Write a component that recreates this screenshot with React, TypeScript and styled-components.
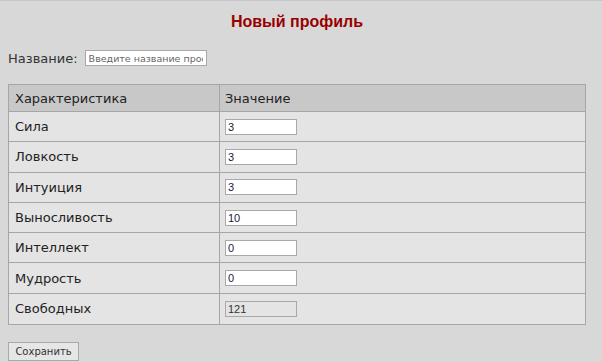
import React from "react";
import styled, { createGlobalStyle } from "styled-components";

const Global = createGlobalStyle`
  html, body { margin: 0; padding: 0; background: #d8d8d8; }
  body { font-family: "DejaVu Sans", Verdana, sans-serif; }
  * { box-sizing: border-box; }
`;

const Page = styled.div`
  width: 602px;
  height: 362px;
  border-top: 1px solid #c6c6c6;
  padding: 0 16px 0 8px;
  overflow: hidden;
`;

const Title = styled.h1`
  margin: 0;
  padding-top: 10px;
  line-height: 22px;
  font-family: "Liberation Sans", Arial, sans-serif;
  font-size: 16px;
  font-weight: bold;
  color: #990000;
  text-align: center;
`;

const NameRow = styled.div`
  display: flex;
  align-items: center;
  gap: 7px;
  margin-top: 17px;
  height: 16px;
`;

const Label = styled.label`
  font-size: 13px;
  color: #333;
`;

const NameInput = styled.input`
  width: 122px;
  height: 16px;
  border: 1px solid #a9a9a9;
  background: #fff;
  padding: 0 3px;
  font-family: "DejaVu Sans", Verdana, sans-serif;
  font-size: 9.5px;
  outline: none;
  &::placeholder { color: #666; }
`;

const Grid = styled.div`
  margin-top: 18px;
  width: 578px;
  border: 1px solid #a6a6a6;
  display: grid;
  grid-template-columns: 211px 1fr;
  grid-template-rows: 27px;
  grid-auto-rows: 30.3px;
  background: #e4e4e4;
`;

const Cell = styled.div<{ $head?: boolean; $first?: boolean; $last?: boolean }>`
  display: flex;
  align-items: center;
  padding-left: ${(p) => (p.$first ? 6 : 5)}px;
  font-size: 13px;
  color: #222;
  background: ${(p) => (p.$head ? "#c8c8c8" : "#e4e4e4")};
  border-right: ${(p) => (p.$first ? "1px solid #a6a6a6" : "none")};
  border-bottom: ${(p) => (p.$last ? "none" : "1px solid #a6a6a6")};
`;

const ValueInput = styled.input<{ $disabled?: boolean }>`
  width: 72px;
  height: 16px;
  border: 1px solid #a9a9a9;
  background: ${(p) => (p.$disabled ? "#e4e4e4" : "#fff")};
  padding: 0 2px;
  font-family: "Liberation Sans", Arial, sans-serif;
  font-size: 11px;
  color: ${(p) => (p.$disabled ? "#333" : "#1a1a3a")};
  outline: none;
`;

const SaveButton = styled.button`
  margin-top: 17px;
  width: 71px;
  height: 19px;
  border: 1px solid #a9a9a9;
  background: #e6e6e6;
  font-family: "DejaVu Sans", Verdana, sans-serif;
  font-size: 10px;
  color: #333;
  padding: 0;
`;

const rows: [string, string][] = [
  ["Сила", "3"],
  ["Ловкость", "3"],
  ["Интуиция", "3"],
  ["Выносливость", "10"],
  ["Интеллект", "0"],
  ["Мудрость", "0"],
];

export default function App() {
  return (
    <>
      <Global />
      <Page>
        <Title>Новый профиль</Title>
        <NameRow>
          <Label>Название:</Label>
          <NameInput placeholder="Введите название профиля" />
        </NameRow>
        <Grid>
          <Cell $head $first>Характеристика</Cell>
          <Cell $head>Значение</Cell>
          {rows.map(([name, val]) => (
            <React.Fragment key={name}>
              <Cell $first>{name}</Cell>
              <Cell>
                <ValueInput defaultValue={val} />
              </Cell>
            </React.Fragment>
          ))}
          <Cell $first $last>Свободных</Cell>
          <Cell $last>
            <ValueInput $disabled readOnly value="121" />
          </Cell>
        </Grid>
        <SaveButton>Сохранить</SaveButton>
      </Page>
    </>
  );
}
